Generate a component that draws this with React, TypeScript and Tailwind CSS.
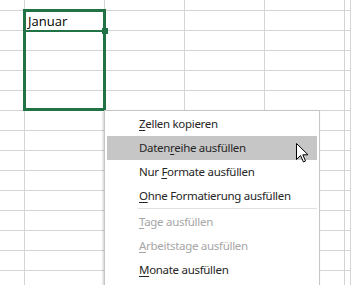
import React from "react";

const cols = [25, 80, 80, 80, 80, 6];
const rows = [11, 20, 20, 20, 20, 20, 20, 20, 20, 20, 20, 20, 20, 20, 20];

type Item = { pre: string; key: string; post: string; disabled?: boolean; active?: boolean };

const items: Item[] = [
  { pre: "", key: "Z", post: "ellen kopieren" },
  { pre: "Daten", key: "r", post: "eihe ausfüllen", active: true },
  { pre: "Nur ", key: "F", post: "ormate ausfüllen" },
  { pre: "", key: "O", post: "hne Formatierung ausfüllen" },
];

const items2: Item[] = [
  { pre: "", key: "T", post: "age ausfüllen", disabled: true },
  { pre: "", key: "A", post: "rbeitstage ausfüllen", disabled: true },
  { pre: "", key: "M", post: "onate ausfüllen" },
];

function MenuItem({ item }: { item: Item }) {
  return (
    <div
      className={`h-[24px] flex items-center pl-[32px] text-[11.5px] tracking-[-0.3px] ${
        item.active ? "bg-[#c6c6c6]" : ""
      } ${item.disabled ? "text-[#a6a6a6]" : "text-[#262626]"}`}
    >
      <span>
        {item.pre}
        <span className="underline underline-offset-[2px]">{item.key}</span>
        {item.post}
      </span>
    </div>
  );
}

export default function App() {
  return (
    <div
      className="relative w-[351px] h-[285px] overflow-hidden bg-white"
      style={{ fontFamily: '"Noto Sans", "Open Sans", sans-serif' }}
    >
      {/* Grid */}
      <div className="flex flex-col">
        {rows.map((h, r) => (
          <div key={r} className="flex" style={{ height: h }}>
            {cols.map((w, c) => (
              <div
                key={c}
                className="shrink-0 border-r border-b border-[#d4d4d4] flex items-end"
                style={{ width: w }}
              >
                {r === 1 && c === 1 && (
                  <span
                    className="pl-[3px] pb-[1px] text-[13px] leading-[16px] text-black"
                    style={{ fontFamily: '"Open Sans", sans-serif' }}
                  >
                    Januar
                  </span>
                )}
              </div>
            ))}
          </div>
        ))}
      </div>

      {/* Selection */}
      <div className="absolute left-[23px] top-[9px] w-[83px] h-[102px] border-[3px] border-[#217346]" />
      <div className="absolute left-[26px] top-[30px] w-[77px] h-[2px] bg-[#217346]" />
      <div className="absolute left-[102px] top-[28px] w-[6px] h-[6px] bg-[#217346]" />

      {/* Context menu */}
      <div className="absolute left-[104px] top-[110px] w-[216px] h-[190px] bg-white border border-[#c6c6c6] px-[2px] pt-[1px] shadow-[-1px_1px_2px_rgba(0,0,0,0.2)]">
        {items.map((it, i) => (
          <MenuItem key={i} item={it} />
        ))}
        <div className="ml-[31px] h-[2px] border-t border-[#e1e1e1]" />
        {items2.map((it, i) => (
          <MenuItem key={i} item={it} />
        ))}
      </div>

      {/* Cursor */}
      <svg className="absolute left-[296px] top-[143px]" width="13" height="20" viewBox="0 0 13 20">
        <path
          d="M0.5 0.5 L0.5 16.5 L4.5 12.5 L7.5 19 L9.5 18 L6.8 11.8 L12 11.8 Z"
          fill="white"
          stroke="black"
          strokeWidth="1"
          strokeLinejoin="miter"
        />
      </svg>
    </div>
  );
}
